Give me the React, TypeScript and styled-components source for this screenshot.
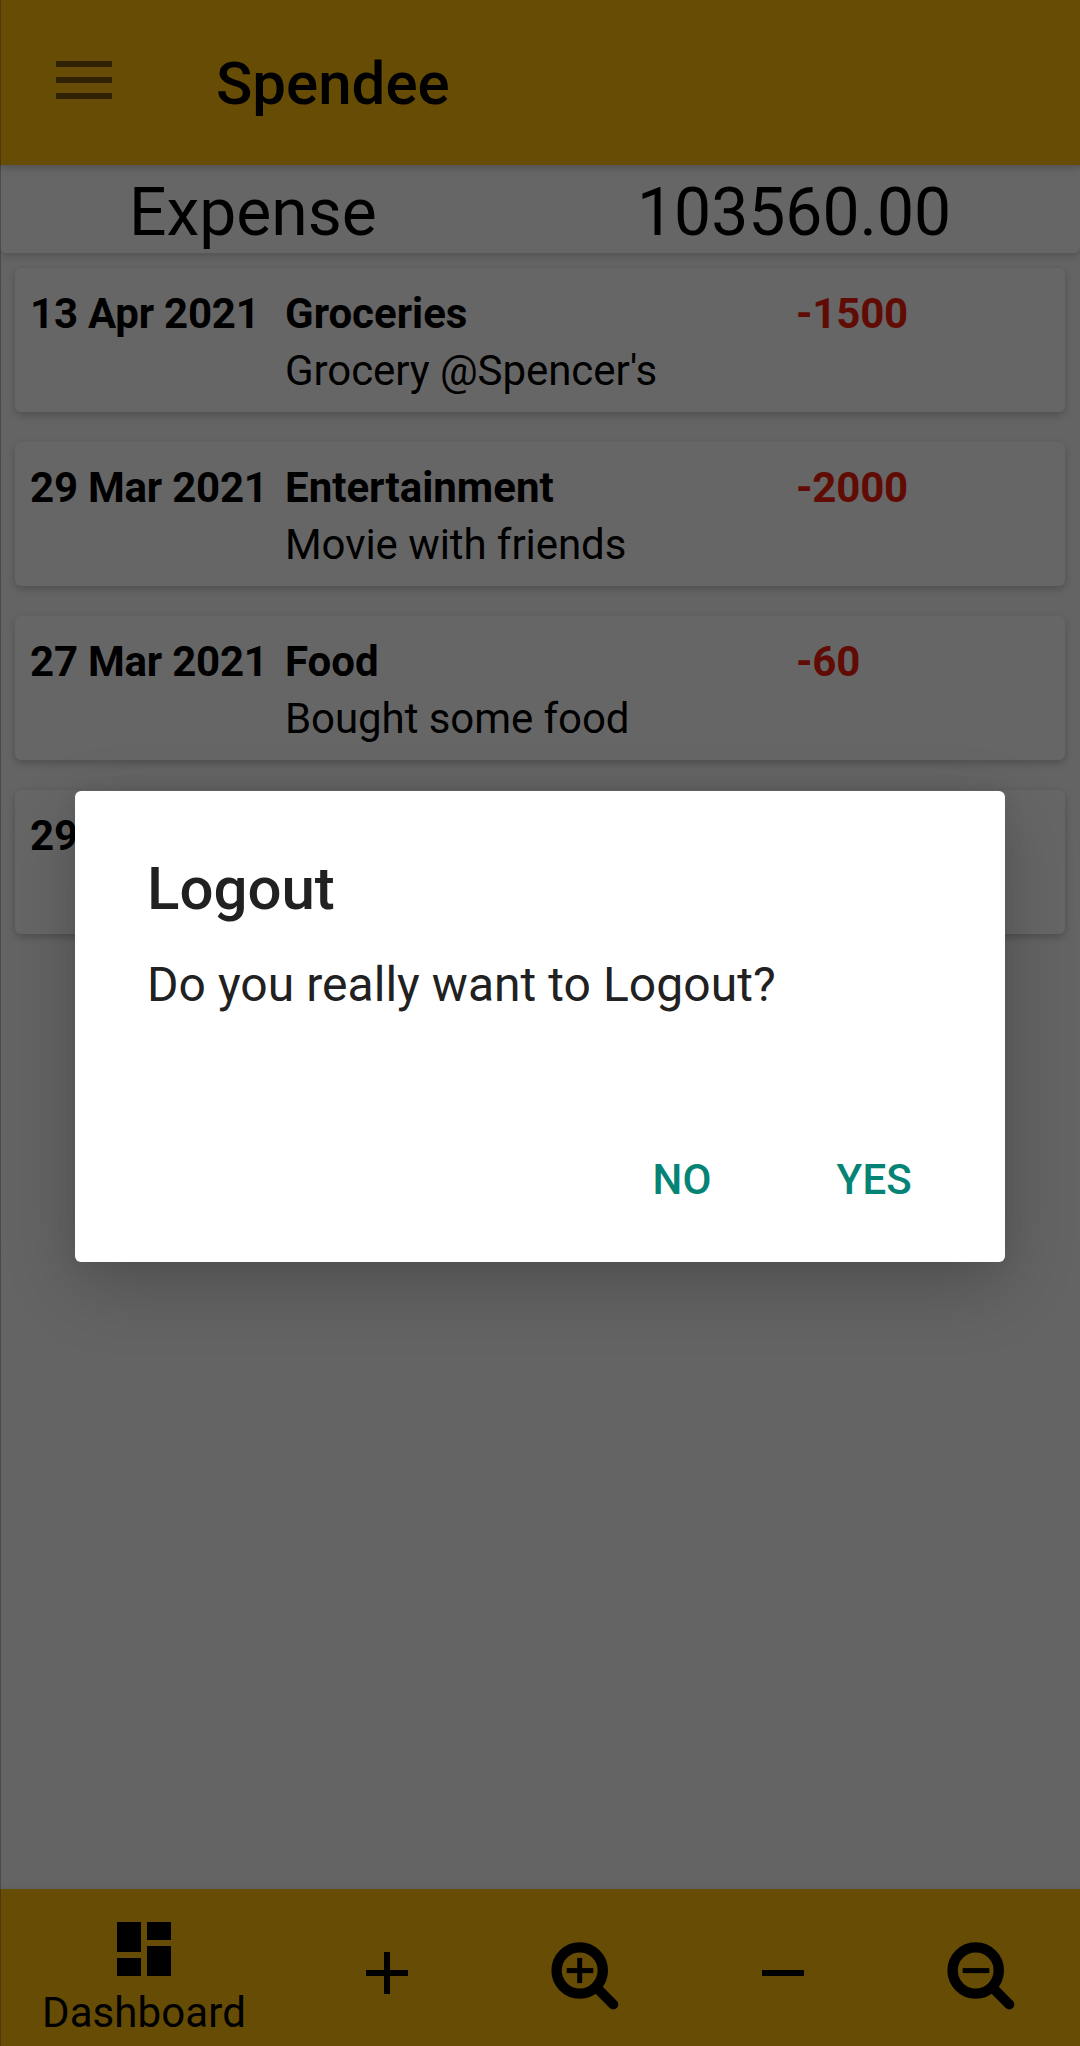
import React from "react";
import styled, { createGlobalStyle } from "styled-components";

const GlobalStyle = createGlobalStyle`
  * { box-sizing: border-box; }
  body { margin: 0; background: #fafafa; font-family: Roboto, "Liberation Sans", sans-serif; }
  button { font: inherit; border: 0; background: none; padding: 0; color: inherit; }
  h1, h2, p { margin: 0; font-weight: inherit; }
`;

const Screen = styled.div`
  position: relative;
  display: flex;
  flex-direction: column;
  width: 1080px;
  height: 2046px;
  background: #fafafa;
  color: #000;
  overflow: hidden;
`;

const AppBar = styled.header`
  display: flex;
  align-items: flex-start;
  height: 165px;
  padding: 61px 56px 0;
  background: #ffbd0a;
  box-shadow: 0 2px 9px rgba(0, 0, 0, 0.26);
  z-index: 1;
`;

const MenuButton = styled.button`
  display: flex;
  flex-direction: column;
  gap: 10px;
  width: 56px;
`;

const MenuBar = styled.span`
  height: 6px;
  background: #735505;
`;

const AppTitle = styled.h1`
  margin: -13px 0 0 104px;
  font-size: 60px;
  line-height: 72px;
  font-weight: 500;
`;

const SummaryCard = styled.section`
  display: grid;
  grid-template-columns: 1fr 1fr;
  height: 88px;
  border-radius: 6px;
  background: #fff;
  box-shadow: 0 3px 8px rgba(0, 0, 0, 0.18);
  font-size: 66px;
  line-height: 76px;
  padding-top: 10px;
`;

const SummaryLabel = styled.span`
  padding-left: 129px;
`;

const SummaryValue = styled.span`
  padding-left: 97px;
`;

const List = styled.main`
  flex: 1;
  display: flex;
  flex-direction: column;
  gap: 30px;
  padding: 15px;
`;

const Card = styled.article`
  display: grid;
  grid-template-columns: 255px 511px 1fr;
  grid-template-rows: 57px 57px;
  height: 144px;
  padding: 17px 15px 0 15px;
  border-radius: 6px;
  background: #fff;
  box-shadow: 0 3px 9px rgba(0, 0, 0, 0.22);
  font-size: 42px;
  line-height: 57px;
  white-space: nowrap;
`;

const Strong = styled.span<{ $color?: string; $tracking?: number }>`
  font-weight: 700;
  color: ${(p) => p.$color ?? "inherit"};
  letter-spacing: ${(p) => p.$tracking ?? 0}px;
`;

const Note = styled.span`
  grid-column: 2;
  letter-spacing: -0.07px;
`;

const BottomBar = styled.nav`
  display: grid;
  grid-template-columns: 288px repeat(4, 198px);
  height: 157px;
  background: #ffbd0a;
  box-shadow: 0 -2px 6px rgba(0, 0, 0, 0.06);
`;

const NavItem = styled.button<{ $top: number }>`
  display: flex;
  flex-direction: column;
  align-items: center;
  justify-content: flex-start;
  padding-top: ${(p) => p.$top}px;
  svg { display: block; }
`;

const NavLabel = styled.span`
  font-size: 42px;
  line-height: 50px;
  margin-top: 3px;
  letter-spacing: 0.1px;
`;

const Scrim = styled.div`
  position: absolute;
  inset: 0;
  z-index: 2;
  display: flex;
  justify-content: center;
  align-items: flex-start;
  padding-top: 791px;
  background: rgba(0, 0, 0, 0.6);
  box-shadow: inset 1px 0 0 rgba(0, 0, 0, 0.25);
`;

const Dialog = styled.div`
  display: flex;
  flex-direction: column;
  width: 930px;
  height: 471px;
  padding: 62px 73px 0 72px;
  border-radius: 6px;
  background: #fff;
  color: #212121;
  box-shadow: 0 24px 72px rgba(0, 0, 0, 0.2), 0 3px 24px rgba(0, 0, 0, 0.06);
`;

const DialogTitle = styled.h2`
  font-size: 60px;
  line-height: 72px;
  font-weight: 500;
`;

const DialogText = styled.p`
  margin-top: 31px;
  font-size: 48px;
  line-height: 58px;
  letter-spacing: 0.04px;
`;

const DialogActions = styled.div`
  display: flex;
  justify-content: flex-end;
  margin-top: 141px;
  padding-right: 20px;
  gap: 125px;
`;

const DialogButton = styled.button`
  font-size: 42px;
  line-height: 50px;
  font-weight: 500;
  letter-spacing: 0.2px;
  color: #058476;
`;

const expenses = [
  { date: "13 Apr 2021", category: "Groceries", note: "Grocery @Spencer's", amount: "-1500" },
  { date: "29 Mar 2021", category: "Entertainment", note: "Movie with friends", amount: "-2000" },
  { date: "27 Mar 2021", category: "Food", note: "Bought some food", amount: "-60" },
  { date: "29 Mar 2021", category: "", note: "", amount: "" },
];

const DashboardIcon = () => (
  <svg width="72" height="72" viewBox="0 0 24 24">
    <path d="M3 13h8V3H3v10zm0 8h8v-6H3v6zm10 0h8V11h-8v10zm0-18v6h8V3h-8z" />
  </svg>
);

const SignIcon = ({ plus }: { plus?: boolean }) => (
  <svg width="72" height="72" viewBox="0 0 24 24">
    <path d={plus ? "M19 13h-6v6h-2v-6H5v-2h6V5h2v6h6v2z" : "M19 13H5v-2h14v2z"} />
  </svg>
);

const ZoomIcon = ({ plus }: { plus?: boolean }) => (
  <svg width="68" height="68" viewBox="0 0 68 68" fill="none" stroke="#000">
    <circle cx="28.7" cy="28.5" r="23.1" strokeWidth="10.4" />
    <path d="M45 45L62.3 62.5" strokeWidth="10" strokeLinecap="round" />
    <path d="M18.2 28.6H39.8" strokeWidth="5" strokeLinecap="square" />
    {plus && <path d="M28.7 18.4V38.6" strokeWidth="5" strokeLinecap="square" />}
  </svg>
);

export default function App() {
  return (
    <>
      <GlobalStyle />
      <Screen>
        <AppBar>
          <MenuButton aria-label="Menu">
            <MenuBar />
            <MenuBar />
            <MenuBar />
          </MenuButton>
          <AppTitle>Spendee</AppTitle>
        </AppBar>
        <SummaryCard>
          <SummaryLabel>Expense</SummaryLabel>
          <SummaryValue>103560.00</SummaryValue>
        </SummaryCard>
        <List>
          {expenses.map((e, i) => (
            <Card key={i}>
              <Strong $tracking={-0.22}>{e.date}</Strong>
              <Strong>{e.category}</Strong>
              <Strong $color="#f01c0c" $tracking={-0.2}>{e.amount}</Strong>
              <Note>{e.note}</Note>
            </Card>
          ))}
        </List>
        <BottomBar>
          <NavItem $top={24}>
            <DashboardIcon />
            <NavLabel>Dashboard</NavLabel>
          </NavItem>
          <NavItem $top={48} aria-label="Add">
            <SignIcon plus />
          </NavItem>
          <NavItem $top={53} aria-label="Zoom in">
            <ZoomIcon plus />
          </NavItem>
          <NavItem $top={48} aria-label="Subtract">
            <SignIcon />
          </NavItem>
          <NavItem $top={53} aria-label="Zoom out">
            <ZoomIcon />
          </NavItem>
        </BottomBar>
        <Scrim>
          <Dialog role="dialog" aria-label="Logout">
            <DialogTitle>Logout</DialogTitle>
            <DialogText>Do you really want to Logout?</DialogText>
            <DialogActions>
              <DialogButton>NO</DialogButton>
              <DialogButton>YES</DialogButton>
            </DialogActions>
          </Dialog>
        </Scrim>
      </Screen>
    </>
  );
}
